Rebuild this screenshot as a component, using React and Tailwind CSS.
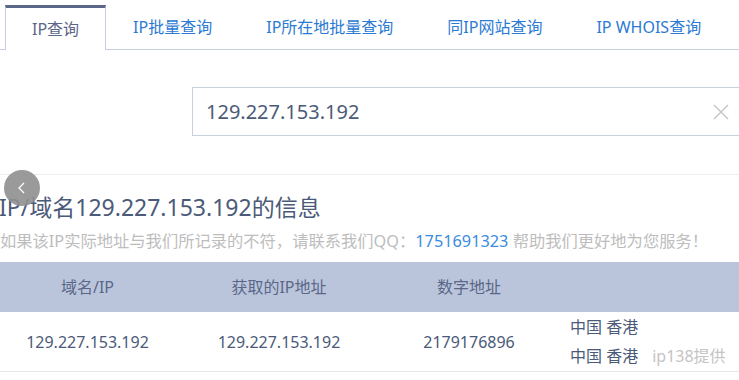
import React from "react";

const tabs = ["IP查询", "IP批量查询", "IP所在地批量查询", "同IP网站查询", "IP WHOIS查询"];

export default function App() {
  return (
    <div
      className="relative w-[739px] h-[380px] overflow-hidden bg-white"
      style={{ fontFamily: '"Noto Sans", "Noto Sans CJK SC", sans-serif' }}
    >
      {/* Tabs */}
      <div className="flex pl-[5px] pt-[5px] border-b border-[#c8cee0]">
        {tabs.map((t, i) =>
          i === 0 ? (
            <div
              key={t}
              className="-mb-px h-[45px] px-[26px] flex items-center border-t-[3px] border-t-[#5b6787] border-x border-x-[#c8cee0] bg-white text-[16px] text-[#5b6787]"
            >
              {t}
            </div>
          ) : (
            <div
              key={t}
              className="h-[44px] px-[26px] flex items-center border-x border-x-transparent text-[16px] text-[#2b7ad3]"
            >
              {t}
            </div>
          )
        )}
      </div>

      {/* Search */}
      <div className="pt-[37px] pb-[38px] pl-[192px] border-b border-[#efefef]">
        <div className="w-[570px] h-[49px] border border-[#c8cfdd] flex items-center pl-[13px] pr-[31px]">
          <span className="flex-1 text-[20px] text-[#4b5a78]">129.227.153.192</span>
          <svg width="18" height="18" viewBox="0 0 18 18">
            <path d="M2 2 L16 16 M16 2 L2 16" stroke="#c4c4c4" strokeWidth="1.4" fill="none" />
          </svg>
        </div>
      </div>

      {/* Title */}
      <div className="pt-[16px]">
        <div className="h-[32px] flex items-center text-[23px] text-[#4b5a78] -ml-[1px]">
          IP/域名129.227.153.192的信息
        </div>
        <div className="h-[36px] flex items-center text-[16.3px] text-[#bdbdbd]">
          如果该IP实际地址与我们所记录的不符，请联系我们QQ：
          <span className="text-[#3b8ce0]">1751691323</span>
          &nbsp;帮助我们更好地为您服务！
        </div>
      </div>

      {/* Table */}
      <div className="mt-[3px]">
        <div className="flex h-[50px] bg-[#bac5dc] text-[16px] text-[#5b6787]">
          <div className="w-[175px] flex items-center justify-center">域名/IP</div>
          <div className="w-[208px] flex items-center justify-center">获取的IP地址</div>
          <div className="w-[172px] flex items-center justify-center">数字地址</div>
          <div className="flex-1" />
        </div>
        <div className="flex h-[60px] border-b border-[#e6e6e6] text-[16px] text-[#4b5a78]">
          <div className="w-[175px] flex items-center justify-center">129.227.153.192</div>
          <div className="w-[208px] flex items-center justify-center">129.227.153.192</div>
          <div className="w-[172px] flex items-center justify-center">2179176896</div>
          <div className="flex-1 pl-[15px] flex flex-col">
            <div className="h-[31px] flex items-center">中国 香港</div>
            <div className="h-[30px] flex items-center">
              中国 香港<span className="ml-[14px] text-[#c4c4c4]">ip138提供</span>
            </div>
          </div>
        </div>
      </div>

      {/* Back circle */}
      <div className="absolute left-[4px] top-[170px] w-[36px] h-[36px] rounded-full bg-[#8f8f8f]/90 flex items-center justify-center">
        <svg width="12" height="14" viewBox="0 0 12 14">
          <path d="M8 2 L3 7 L8 12" stroke="#ffffff" strokeWidth="1.3" fill="none" />
        </svg>
      </div>
    </div>
  );
}
